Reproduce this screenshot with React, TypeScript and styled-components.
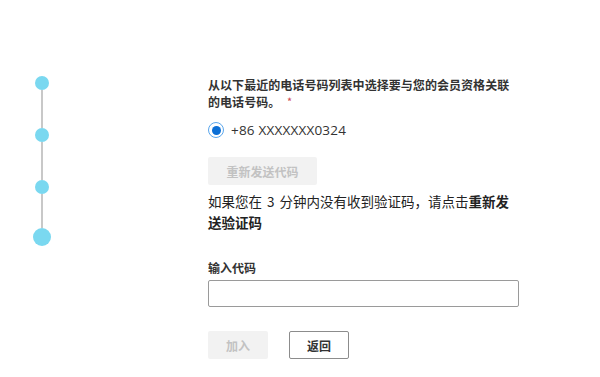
import React from "react";
import styled, { createGlobalStyle } from "styled-components";

const Global = createGlobalStyle`
  html, body { margin: 0; padding: 0; background: #ffffff; }
  body { font-family: "Noto Sans CJK SC", "Noto Sans", sans-serif; color: #333; }
`;

const Page = styled.div`
  display: flex;
  width: 600px;
  height: 377px;
  overflow: hidden;
`;

const Stepper = styled.div`
  width: 84px;
  padding-top: 76px;
  display: flex;
  flex-direction: column;
  align-items: center;
`;

const Dot = styled.div<{ $size: number }>`
  width: ${(p) => p.$size}px;
  height: ${(p) => p.$size}px;
  border-radius: 50%;
  background: #7ad8f0;
  flex-shrink: 0;
`;

const Segment = styled.div<{ $len: number }>`
  width: 2px;
  height: ${(p) => p.$len}px;
  background: #c8c8c8;
`;

const Content = styled.div`
  margin-left: 124px;
  width: 311px;
  padding-top: 76px;
  display: flex;
  flex-direction: column;
  align-items: flex-start;
`;

const Heading = styled.div`
  font-size: 12px;
  line-height: 17px;
  font-weight: 700;
  color: #333;
  letter-spacing: 0.05px;
`;

const Required = styled.span`
  color: #d0505a;
  font-size: 9px;
  margin-left: 7px;
  vertical-align: top;
`;

const RadioRow = styled.label`
  margin-top: 10px;
  display: flex;
  align-items: center;
  gap: 7px;
  height: 20px;
`;

const RadioOuter = styled.span`
  width: 14px;
  height: 14px;
  border-radius: 50%;
  border: 1.5px solid #5aa6ec;
  display: flex;
  align-items: center;
  justify-content: center;
  flex-shrink: 0;
`;

const RadioInner = styled.span`
  width: 9px;
  height: 9px;
  border-radius: 50%;
  background: #0b6fd6;
`;

const Phone = styled.span`
  font-family: "Open Sans", "Noto Sans", sans-serif;
  font-size: 13.5px;
  color: #333;
  letter-spacing: 0.2px;
`;

const GreyButton = styled.button<{ $width: number; $top: number }>`
  margin-top: ${(p) => p.$top}px;
  width: ${(p) => p.$width}px;
  height: 28px;
  border: none;
  border-radius: 2px;
  background: #f2f2f2;
  color: #c2c2c2;
  font-family: "Noto Sans CJK SC", sans-serif;
  font-size: 12px;
  font-weight: 700;
  padding: 0;
`;

const OutlineButton = styled.button`
  width: 60px;
  height: 28px;
  border: 1px solid #8c8c8c;
  border-radius: 2px;
  background: #fff;
  color: #333;
  font-family: "Noto Sans CJK SC", sans-serif;
  font-size: 12px;
  font-weight: 700;
  padding: 0;
`;

const Paragraph = styled.div`
  margin-top: 6px;
  font-size: 13.5px;
  line-height: 21px;
  color: #222;
  word-spacing: 2px;
`;

const Strong = styled.b`
  font-weight: 700;
`;

const Label = styled.div`
  margin-top: 26px;
  font-size: 12px;
  line-height: 17px;
  font-weight: 700;
  color: #333;
`;

const Input = styled.input`
  margin-top: 4px;
  box-sizing: border-box;
  width: 311px;
  height: 27px;
  border: 1px solid #9a9a9a;
  border-radius: 2px;
  outline: none;
`;

const Actions = styled.div`
  margin-top: 24px;
  display: flex;
  gap: 21px;
`;

export default function App() {
  return (
    <>
      <Global />
      <Page>
        <Stepper>
          <Dot $size={14} />
          <Segment $len={38} />
          <Dot $size={14} />
          <Segment $len={38} />
          <Dot $size={14} />
          <Segment $len={34} />
          <Dot $size={18} />
        </Stepper>
        <Content>
          <Heading>
            从以下最近的电话号码列表中选择要与您的会员资格关联的电话号码。
            <Required>*</Required>
          </Heading>
          <RadioRow>
            <RadioOuter>
              <RadioInner />
            </RadioOuter>
            <Phone>+86 XXXXXXX0324</Phone>
          </RadioRow>
          <GreyButton $width={109} $top={17}>重新发送代码</GreyButton>
          <Paragraph>
            如果您在 3 分钟内没有收到验证码，请点击<Strong>重新发送验证码</Strong>
          </Paragraph>
          <Label>输入代码</Label>
          <Input type="text" />
          <Actions>
            <GreyButton $width={60} $top={0}>加入</GreyButton>
            <OutlineButton>返回</OutlineButton>
          </Actions>
        </Content>
      </Page>
    </>
  );
}
